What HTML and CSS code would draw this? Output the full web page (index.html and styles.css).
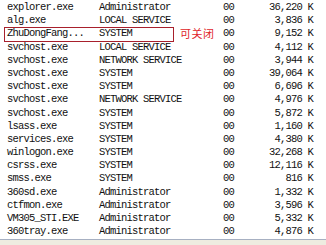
FILE: index.html
```html
<!DOCTYPE html>
<html>
<head>
<meta charset="utf-8">
<link rel="stylesheet" href="styles.css">
</head>
<body>
<div class="list">
  <div class="row"><span class="name">explorer.exe</span><span class="user">Administrator</span><span class="cpu">00</span><span class="mem">36,220 K</span></div>
  <div class="row"><span class="name">alg.exe</span><span class="user">LOCAL SERVICE</span><span class="cpu">00</span><span class="mem">3,836 K</span></div>
  <div class="row marked"><span class="name">ZhuDongFang...</span><span class="user">SYSTEM</span><span class="cpu">00</span><span class="mem">9,152 K</span><span class="box"></span><span class="note">可关闭</span></div>
  <div class="row"><span class="name">svchost.exe</span><span class="user">LOCAL SERVICE</span><span class="cpu">00</span><span class="mem">4,112 K</span></div>
  <div class="row"><span class="name">svchost.exe</span><span class="user">NETWORK SERVICE</span><span class="cpu">00</span><span class="mem">3,944 K</span></div>
  <div class="row"><span class="name">svchost.exe</span><span class="user">SYSTEM</span><span class="cpu">00</span><span class="mem">39,064 K</span></div>
  <div class="row"><span class="name">svchost.exe</span><span class="user">SYSTEM</span><span class="cpu">00</span><span class="mem">6,696 K</span></div>
  <div class="row"><span class="name">svchost.exe</span><span class="user">NETWORK SERVICE</span><span class="cpu">00</span><span class="mem">4,976 K</span></div>
  <div class="row"><span class="name">svchost.exe</span><span class="user">SYSTEM</span><span class="cpu">00</span><span class="mem">5,872 K</span></div>
  <div class="row"><span class="name">lsass.exe</span><span class="user">SYSTEM</span><span class="cpu">00</span><span class="mem">1,160 K</span></div>
  <div class="row"><span class="name">services.exe</span><span class="user">SYSTEM</span><span class="cpu">00</span><span class="mem">4,380 K</span></div>
  <div class="row"><span class="name">winlogon.exe</span><span class="user">SYSTEM</span><span class="cpu">00</span><span class="mem">32,268 K</span></div>
  <div class="row"><span class="name">csrss.exe</span><span class="user">SYSTEM</span><span class="cpu">00</span><span class="mem">12,116 K</span></div>
  <div class="row"><span class="name">smss.exe</span><span class="user">SYSTEM</span><span class="cpu">00</span><span class="mem">816 K</span></div>
  <div class="row"><span class="name">360sd.exe</span><span class="user">Administrator</span><span class="cpu">00</span><span class="mem">1,332 K</span></div>
  <div class="row"><span class="name">ctfmon.exe</span><span class="user">Administrator</span><span class="cpu">00</span><span class="mem">3,596 K</span></div>
  <div class="row"><span class="name">VM305_STI.EXE</span><span class="user">Administrator</span><span class="cpu">00</span><span class="mem">5,332 K</span></div>
  <div class="row"><span class="name">360tray.exe</span><span class="user">Administrator</span><span class="cpu">00</span><span class="mem">4,876 K</span></div>
  <div class="row"><span class="name">System</span><span class="user">SYSTEM</span><span class="cpu">00</span><span class="mem">284 K</span></div>
</div>
<div class="status"></div>
</body>
</html>
```
FILE: styles.css
```css
html, body {
  margin: 0;
  padding: 0;
  background: #ffffff;
  width: 326px;
  height: 245px;
  overflow: hidden;
}
.list {
  height: 239px;
  overflow: hidden;
  padding-top: 1px;
  box-sizing: border-box;
  font-family: "Liberation Mono", "DejaVu Sans Mono", monospace;
  font-size: 10.5px;
  letter-spacing: -0.8px;
  color: #111;
}
.row {
  position: relative;
  display: grid;
  grid-template-columns: 92px 124px 13px 77px;
  padding-left: 7px;
  height: 13.2px;
  line-height: 13.2px;
  white-space: nowrap;
}
.mem { text-align: right; }
.box {
  position: absolute;
  left: 4px;
  top: 0;
  width: 168px;
  height: 13px;
  border: 1px solid #a8202c;
}
.note {
  position: absolute;
  left: 180px;
  top: 0;
  font-family: "Noto Sans CJK SC", sans-serif;
  font-size: 11px;
  letter-spacing: 0.5px;
  color: #e0252a;
  line-height: 13px;
}
.status {
  height: 6px;
  border-top: 1px solid #a7b0c2;
  background: #eeece0;
}
```
